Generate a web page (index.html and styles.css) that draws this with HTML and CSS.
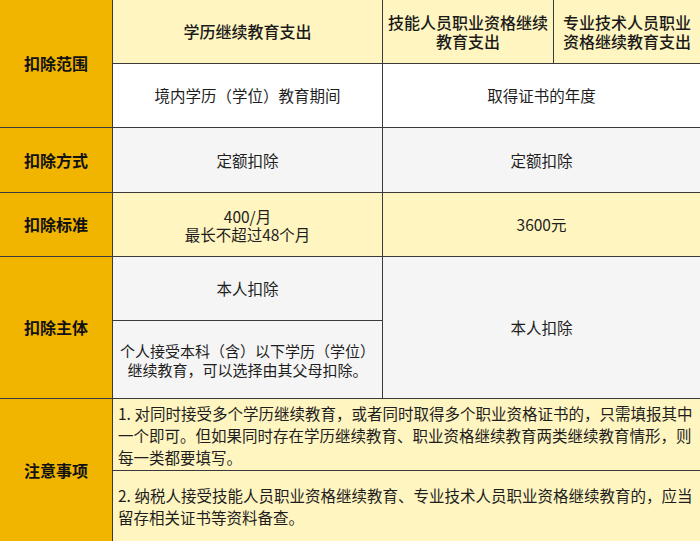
FILE: index.html
```html
<!DOCTYPE html>
<html lang="zh-CN">
<head>
<meta charset="utf-8">
<link rel="stylesheet" href="styles.css">
</head>
<body>
<table class="tbl">
  <colgroup>
    <col class="c1">
    <col class="c2">
    <col class="c3">
    <col class="c4">
  </colgroup>
  <tr class="r1">
    <th class="label" rowspan="2">扣除范围</th>
    <td class="head">学历继续教育支出</td>
    <td class="head">技能人员职业资格继续教育支出</td>
    <td class="head">专业技术人员职业资格继续教育支出</td>
  </tr>
  <tr class="r2">
    <td class="white">境内学历（学位）教育期间</td>
    <td class="white" colspan="2">取得证书的年度</td>
  </tr>
  <tr class="r3">
    <th class="label">扣除方式</th>
    <td class="grey">定额扣除</td>
    <td class="grey" colspan="2">定额扣除</td>
  </tr>
  <tr class="r4">
    <th class="label">扣除标准</th>
    <td class="yellow two"><div>400/月</div><div>最长不超过48个月</div></td>
    <td class="yellow" colspan="2">3600元</td>
  </tr>
  <tr class="r5a">
    <th class="label" rowspan="2">扣除主体</th>
    <td class="grey">本人扣除</td>
    <td class="grey" colspan="2" rowspan="2">本人扣除</td>
  </tr>
  <tr class="r5b">
    <td class="grey small">个人接受本科（含）以下学历（学位）继续教育，可以选择由其父母扣除。</td>
  </tr>
  <tr class="r6a">
    <th class="label" rowspan="2">注意事项</th>
    <td class="yellow note" colspan="3">1. 对同时接受多个学历继续教育，或者同时取得多个职业资格证书的，只需填报其中<br>一个即可。但如果同时存在学历继续教育、职业资格继续教育两类继续教育情形，则<br>每一类都要填写。</td>
  </tr>
  <tr class="r6b">
    <td class="yellow note" colspan="3">2. 纳税人接受技能人员职业资格继续教育、专业技术人员职业资格继续教育的，应当<br>留存相关证书等资料备查。</td>
  </tr>
</table>
</body>
</html>
```

FILE: styles.css
```css
html, body {
  margin: 0;
  padding: 0;
  background: #ffffff;
}

body {
  width: 700px;
  height: 541px;
  overflow: hidden;
  font-family: "Noto Sans CJK SC", "Noto Sans", sans-serif;
  font-size: 15.5px;
  color: #1e1e1e;
}

.tbl {
  border-collapse: collapse;
  table-layout: fixed;
  width: 701px;
  margin: -1px 0 0 -1px;
}

.c1 { width: 113px; }
.c2 { width: 270px; }
.c3 { width: 171px; }
.c4 { width: 147px; }

.tbl th,
.tbl td {
  border: 1px solid #3a3a3a;
  padding: 0 4px;
  text-align: center;
  vertical-align: middle;
  line-height: 19px;
}

.label {
  background: #f1b500;
  color: #111111;
  font-size: 16px;
  font-weight: 700;
}

.head {
  background: #fff5c0;
  font-size: 16px;
  font-weight: 500;
  line-height: 20px;
  color: #1a1a1a;
}

.white { background: #ffffff; }
.grey { background: #f5f5f5; }
.yellow { background: #fff5c0; }

.tbl .two {
  line-height: 18px;
}

.two div {
  line-height: 18px;
}

.small {
  font-size: 15px;
}

.tbl .note {
  text-align: left;
  line-height: 22px;
  padding: 0 2px 0 5px;
  white-space: nowrap;
}

.r1 { height: 64px; }
.r2 { height: 64px; }
.r3 { height: 65px; }
.r4 { height: 64px; }
.r5a { height: 64px; }
.r5b { height: 78px; }
.r6a { height: 72px; }
.r6b { height: 71px; }
```
